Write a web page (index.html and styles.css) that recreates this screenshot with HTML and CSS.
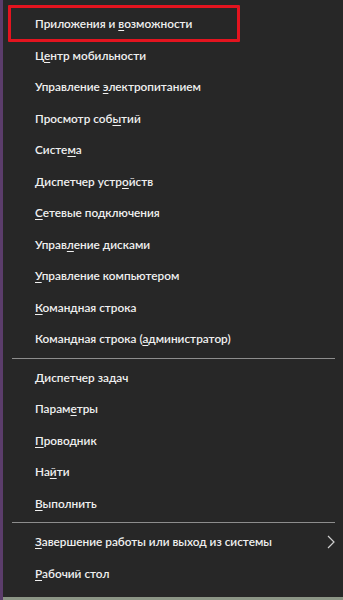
FILE: index.html
```html
<!DOCTYPE html>
<html lang="ru">
<head>
	<meta charset="UTF-8">
	<title>Меню Win+X</title>
	<link rel="stylesheet" href="styles.css">
</head>
<body>

<div class="screen">
	<div class="menu">
		<div class="group">
			<div class="item first">Приложения и <u>в</u>озможности<span class="mark"></span></div>
			<div class="item">Ц<u>е</u>нтр мобильности</div>
			<div class="item">Управление <u>э</u>лектропитанием</div>
			<div class="item">Просмотр соб<u>ы</u>тий</div>
			<div class="item">Систе<u>м</u>а</div>
			<div class="item">Диспетчер устр<u>о</u>йств</div>
			<div class="item"><u>С</u>етевые подключения</div>
			<div class="item">Управ<u>л</u>ение дисками</div>
			<div class="item"><u>У</u>правление компьютером</div>
			<div class="item"><u>К</u>омандная строка</div>
			<div class="item">Командная строка (<u>а</u>дминистратор)</div>
		</div>
		<div class="sep"></div>
		<div class="group">
			<div class="item"><u>Д</u>испетчер задач</div>
			<div class="item">Парам<u>е</u>тры</div>
			<div class="item"><u>П</u>роводник</div>
			<div class="item">На<u>й</u>ти</div>
			<div class="item"><u>В</u>ыполнить</div>
		</div>
		<div class="sep"></div>
		<div class="group">
			<div class="item sub"><span><u>З</u>авершение работы или выход из системы</span>
				<svg class="chev" width="8" height="14" viewBox="0 0 8 14"><polyline points="1,1 7,7 1,13" fill="none" stroke="#cfcfcf" stroke-width="1.2"/></svg>
			</div>
			<div class="item"><u>Р</u>абочий стол</div>
		</div>
	</div>
	<div class="taskbar"></div>
</div>

</body>
</html>
```

FILE: styles.css
```css
html, body {
	margin: 0;
	height: 100%;
	background: #272727;
}

.screen {
	height: 600px;
	display: flex;
	flex-direction: column;
	border-left: 3px solid #5b3d6b;
	box-sizing: border-box;
}

.menu {
	flex: 1;
	padding-top: 8px;
	font-family: Lato, "Open Sans", sans-serif;
	font-size: 11.8px;
	font-weight: 600;
	color: #f0f0f0;
}

.item {
	height: 31.5px;
	line-height: 31.5px;
	padding-left: 32px;
	position: relative;
	white-space: nowrap;
}

.item u {
	text-decoration-thickness: 1px;
	text-underline-offset: 2px;
}

.sub {
	display: flex;
	align-items: center;
	justify-content: space-between;
	padding-right: 8px;
}

.chev {
	display: block;
}

.sep {
	height: 1px;
	background: #8d8d8d;
	margin: 3px 8px 3px 9px;
}

/* red annotation frame around the first entry */
.mark {
	position: absolute;
	left: 5px;
	top: -3px;
	width: 226px;
	height: 31px;
	border: 3px solid #e3141f;
	border-radius: 1px;
}

.taskbar {
	height: 3px;
	background: #8c9686;
}
```
